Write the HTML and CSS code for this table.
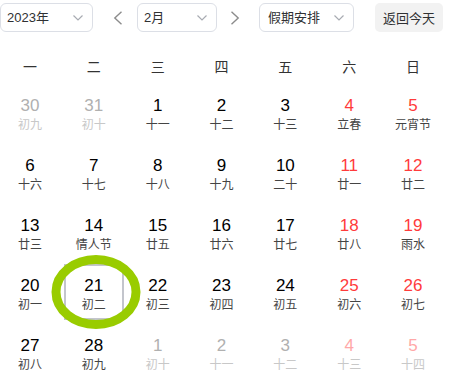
FILE: index.html
```html
<!DOCTYPE html>
<html lang="zh">
<head>
<meta charset="utf-8">
<link rel="stylesheet" href="styles.css">
</head>
<body>
<div class="cal">
  <div class="toolbar">
    <div class="select sel-year"><span>2023年</span><svg class="caret" width="10" height="6" viewBox="0 0 10 6"><polyline points="0.5,0.5 5,5 9.5,0.5" fill="none" stroke="#a8abb2" stroke-width="1.2"/></svg></div>
    <svg class="arrow arrow-l" width="10" height="14" viewBox="0 0 10 14"><polyline points="8.5,0.8 1.8,7 8.5,13.2" fill="none" stroke="#8c8c8c" stroke-width="1.4"/></svg>
    <div class="select sel-month"><span>2月</span><svg class="caret" width="10" height="6" viewBox="0 0 10 6"><polyline points="0.5,0.5 5,5 9.5,0.5" fill="none" stroke="#a8abb2" stroke-width="1.2"/></svg></div>
    <svg class="arrow arrow-r" width="10" height="14" viewBox="0 0 10 14"><polyline points="1.5,0.8 8.2,7 1.5,13.2" fill="none" stroke="#8c8c8c" stroke-width="1.4"/></svg>
    <div class="select sel-hol"><span>假期安排</span><svg class="caret" width="10" height="6" viewBox="0 0 10 6"><polyline points="0.5,0.5 5,5 9.5,0.5" fill="none" stroke="#a8abb2" stroke-width="1.2"/></svg></div>
    <div class="btn-today">返回今天</div>
  </div>
  <div class="weekdays">
    <div>一</div><div>二</div><div>三</div><div>四</div><div>五</div><div>六</div><div>日</div>
  </div>
  <div class="days">
    <div class="day other"><div class="n">30</div><div class="l">初九</div></div>
    <div class="day other"><div class="n">31</div><div class="l">初十</div></div>
    <div class="day"><div class="n">1</div><div class="l">十一</div></div>
    <div class="day"><div class="n">2</div><div class="l">十二</div></div>
    <div class="day"><div class="n">3</div><div class="l">十三</div></div>
    <div class="day we"><div class="n">4</div><div class="l">立春</div></div>
    <div class="day we"><div class="n">5</div><div class="l">元宵节</div></div>

    <div class="day"><div class="n">6</div><div class="l">十六</div></div>
    <div class="day"><div class="n">7</div><div class="l">十七</div></div>
    <div class="day"><div class="n">8</div><div class="l">十八</div></div>
    <div class="day"><div class="n">9</div><div class="l">十九</div></div>
    <div class="day"><div class="n">10</div><div class="l">二十</div></div>
    <div class="day we"><div class="n">11</div><div class="l">廿一</div></div>
    <div class="day we"><div class="n">12</div><div class="l">廿二</div></div>

    <div class="day"><div class="n">13</div><div class="l">廿三</div></div>
    <div class="day"><div class="n">14</div><div class="l">情人节</div></div>
    <div class="day"><div class="n">15</div><div class="l">廿五</div></div>
    <div class="day"><div class="n">16</div><div class="l">廿六</div></div>
    <div class="day"><div class="n">17</div><div class="l">廿七</div></div>
    <div class="day we"><div class="n">18</div><div class="l">廿八</div></div>
    <div class="day we"><div class="n">19</div><div class="l">雨水</div></div>

    <div class="day"><div class="n">20</div><div class="l">初一</div></div>
    <div class="day selected"><div class="n">21</div><div class="l">初二</div></div>
    <div class="day"><div class="n">22</div><div class="l">初三</div></div>
    <div class="day"><div class="n">23</div><div class="l">初四</div></div>
    <div class="day"><div class="n">24</div><div class="l">初五</div></div>
    <div class="day we"><div class="n">25</div><div class="l">初六</div></div>
    <div class="day we"><div class="n">26</div><div class="l">初七</div></div>

    <div class="day"><div class="n">27</div><div class="l">初八</div></div>
    <div class="day"><div class="n">28</div><div class="l">初九</div></div>
    <div class="day other"><div class="n">1</div><div class="l">初十</div></div>
    <div class="day other"><div class="n">2</div><div class="l">十一</div></div>
    <div class="day other"><div class="n">3</div><div class="l">十二</div></div>
    <div class="day other we"><div class="n">4</div><div class="l">十三</div></div>
    <div class="day other we"><div class="n">5</div><div class="l">十四</div></div>
  </div>
  <svg class="mark" width="90" height="74" viewBox="0 0 90 74"><ellipse cx="45" cy="37" rx="40" ry="32.5" fill="none" stroke="#99cc00" stroke-width="9"/></svg>
</div>
</body>
</html>
```
FILE: styles.css
```css
html, body {
  margin: 0;
  padding: 0;
  background: #fff;
}
body {
  font-family: "Liberation Sans", Arial, "Noto Sans CJK SC", sans-serif;
  color: #000;
  overflow: hidden;
}
.cal {
  position: relative;
  width: 443px;
  padding-top: 3px;
}
.toolbar {
  display: flex;
  align-items: center;
  height: 29px;
}
.select {
  box-sizing: border-box;
  height: 29px;
  border: 1px solid #dcdfe6;
  border-radius: 6px;
  display: flex;
  align-items: center;
  justify-content: space-between;
  padding: 0 9px 0 6px;
  font-size: 13px;
  color: #303133;
  font-family: "Liberation Sans", Arial, "Noto Sans CJK SC", sans-serif;
}
.select span {
  line-height: 1;
}
.caret {
  display: block;
}
.sel-year { width: 93px; }
.sel-month { width: 80px; }
.sel-hol { width: 95px; padding-left: 8px; }
.arrow { display: block; }
.arrow-l { margin-left: 20px; margin-right: 14px; }
.arrow-r { margin-left: 13px; margin-right: 19px; }
.btn-today {
  margin-left: 21px;
  height: 29px;
  box-sizing: border-box;
  padding: 0 8px;
  display: flex;
  align-items: center;
  background: #f2f2f2;
  border-radius: 5px;
  font-size: 13px;
  color: #303133;
  font-family: "Noto Sans CJK SC", sans-serif;
}
.weekdays {
  margin-top: 15px;
  display: grid;
  grid-template-columns: repeat(7, 1fr);
  column-gap: 4px;
  height: 37px;
  align-items: center;
  text-align: center;
  font-size: 14px;
  color: #333;
  font-family: "Noto Sans CJK SC", sans-serif;
}
.days {
  display: grid;
  grid-template-columns: repeat(7, 1fr);
  column-gap: 4px;
  row-gap: 4px;
}
.day {
  box-sizing: border-box;
  height: 56px;
  padding-top: 11px;
  text-align: center;
  border: 2px solid transparent;
  padding-top: 9px;
}
.day .n {
  font-size: 17px;
  line-height: 21px;
  color: #000;
}
.day .l {
  font-size: 12px;
  line-height: 16px;
  color: #444;
  font-family: "Noto Sans CJK SC", sans-serif;
}
.day.we .n { color: #ff3b3b; }
.day.other .n { color: #b0b0b0; }
.day.other .l { color: #c8c8c8; }
.day.other.we .n { color: #ffa8a8; }
.day.selected {
  border-color: #c3c5cc;
}
.mark {
  position: absolute;
  left: 51px;
  top: 255px;
}
```
